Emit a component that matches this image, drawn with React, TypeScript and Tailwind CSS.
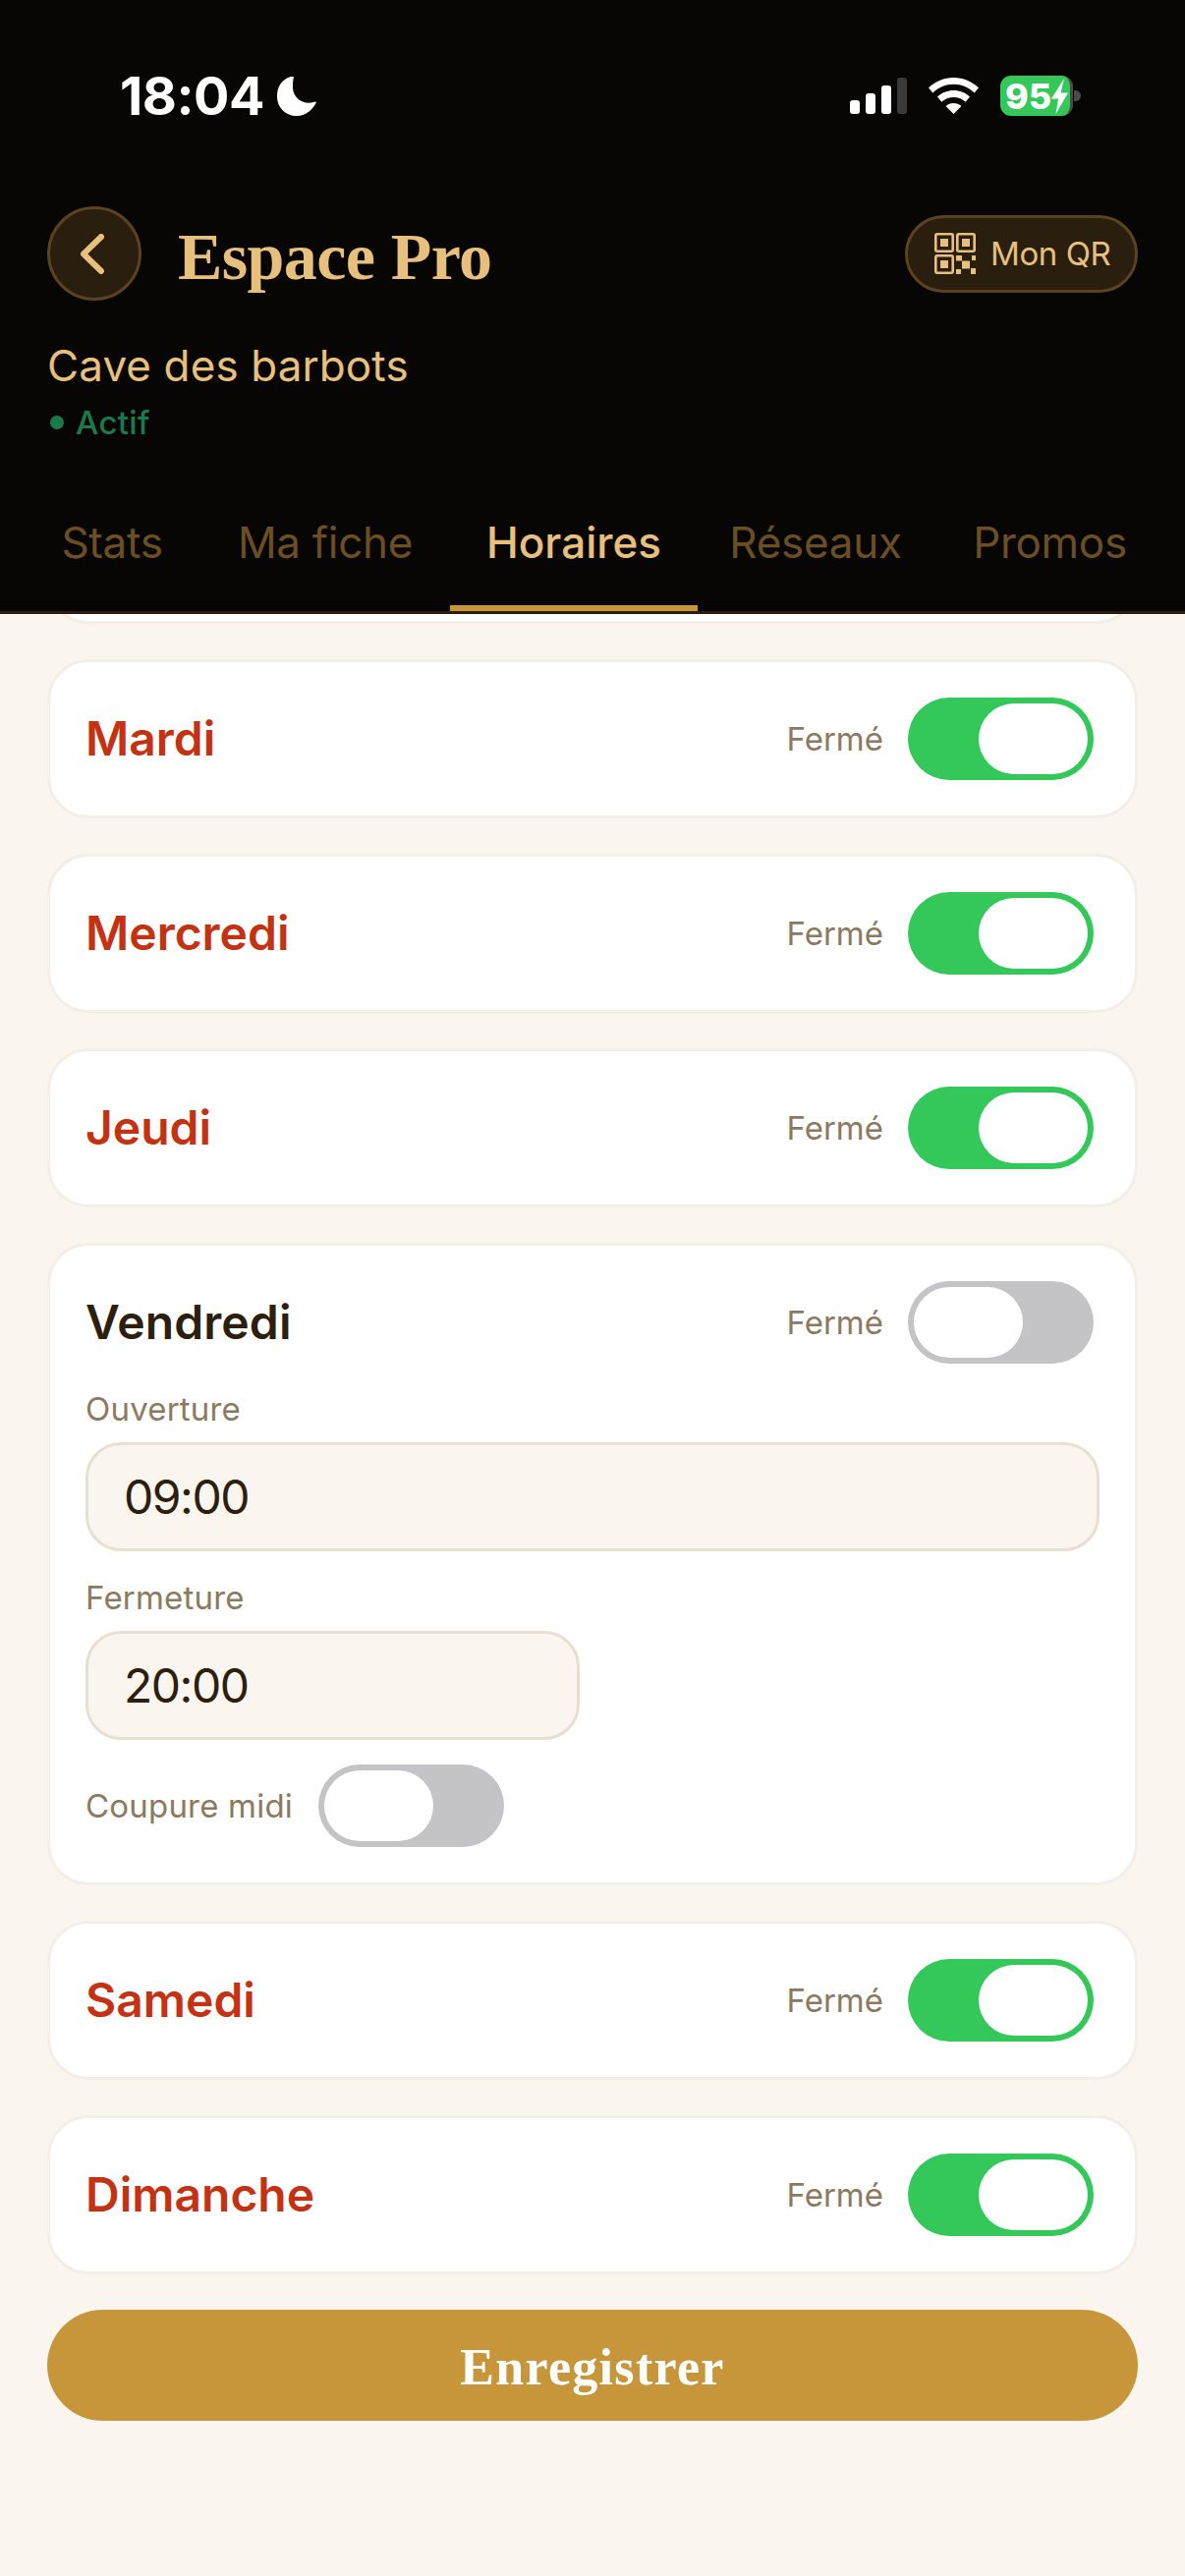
const sans = "font-['Inter','Noto_Sans',sans-serif]";

const Toggle: React.FC<{ on: boolean }> = ({ on }) => (
    <button
        className={`flex h-[84px] w-[189px] shrink-0 items-center rounded-full p-[6px] ${on ? 'justify-end bg-[#34c759]' : 'justify-start bg-[#c4c4c6]'}`}
    >
        <span className="block h-[72px] w-[111px] rounded-full bg-white" />
    </button>
);

const ClosedDay: React.FC<{ name: string }> = ({ name }) => (
    <div className="flex h-[162px] shrink-0 items-center justify-between rounded-[42px] border-[3px] border-[#f3efe8] bg-white pl-[36px] pr-[42px]">
        <span className="text-[48px] font-semibold leading-none tracking-[0px] text-[#c43214]">{name}</span>
        <div className="flex items-center gap-[25px]">
            <span className="text-[33px] leading-none tracking-[0px] text-[#8b7a62]">Fermé</span>
            <Toggle on />
        </div>
    </div>
);

const TimeField: React.FC<{ label: string; value: string; className: string }> = ({ label, value, className }) => (
    <div>
        <div className="text-[33px] leading-[40px] tracking-[0.2px] text-[#8b7a62]">{label}</div>
        <div className={`mt-[14px] flex h-[111px] items-center rounded-[36px] border-[3px] border-[#e8dfd0] bg-[#faf5ef] pl-[36px] text-[48px] leading-none tracking-[-1.5px] text-[#2c1f0e] ${className}`}>
            {value}
        </div>
    </div>
);

const QrIcon = () => (
    <svg width="42" height="42" viewBox="0 0 42 42" fill="#e8c07d" className="shrink-0">
        <g fill="none" stroke="#e8c07d" strokeWidth="2.6">
            <rect x="1.3" y="1.3" width="17.4" height="17.4" rx="1.5" />
            <rect x="23.3" y="1.3" width="17.4" height="17.4" rx="1.5" />
            <rect x="1.3" y="23.3" width="17.4" height="17.4" rx="1.5" />
        </g>
        <rect x="6" y="6" width="8" height="8" />
        <rect x="28" y="6" width="8" height="8" />
        <rect x="6" y="28" width="8" height="8" />
        <rect x="22" y="23" width="6" height="5.5" />
        <rect x="38" y="23" width="4" height="5" />
        <rect x="28" y="28.5" width="8" height="8" />
        <rect x="22" y="37" width="5" height="5" />
        <rect x="37" y="36" width="5" height="6" />
    </svg>
);

const StatusBar = () => (
    <div className="flex h-[41px] items-center justify-between pl-[122px] pr-[106px]">
        <div className="flex items-center gap-[13px]">
            <span className="text-[54px] font-bold leading-none tracking-[-0.5px] text-white">18:04</span>
            <svg width="40" height="40" viewBox="0 0 40 40" fill="white">
                <path d="M14 0C4 3 0 11 0 20c0 12 9 20 20 20 9 0 16-6 20-14-1-1-2-.5-3 0-10 3-21-4-21-15 0-4 0-8 1-10 0-1-1.500-1.200-3-1z" />
            </svg>
        </div>
        <div className="flex items-center">
            <div className="flex h-[37px] items-end gap-[6px]">
                <span className="block h-[14px] w-[10px] rounded-[3px] bg-white" />
                <span className="block h-[21px] w-[10px] rounded-[3px] bg-white" />
                <span className="block h-[29px] w-[10px] rounded-[3px] bg-white" />
                <span className="block h-[37px] w-[10px] rounded-[3px] bg-[#3a3a3a]" />
            </div>
            <svg width="51" height="37" viewBox="0 0 51 37" fill="white" className="ml-[22px]">
                <path d="M25.500 0C15.800 0 7 3.700 0 10.300l4.300 5.200C10.300 10 17.500 6.800 25.500 6.800S40.700 10 46.700 15.500L51 10.300C44 3.700 35.200 0 25.500 0z" />
                <path d="M25.500 13c-6.200 0-12 2.300-16.500 6.600l4.300 5.100c3.300-3.100 7.500-4.800 12.200-4.800s8.900 1.700 12.200 4.800l4.300-5.100C37.500 15.300 31.700 13 25.500 13z" />
                <path d="M25.500 26c-3 0-5.900 1.100-8 3.100L25.500 37l8-7.900c-2.100-2-5-3.100-8-3.100z" />
            </svg>
            <div className="ml-[22px] flex items-center">
                <div className="flex h-[41px] w-[74px] items-center rounded-[11px] border-r-[3px] border-[#4a4a4a] bg-[#34c759] pl-[5px]">
                    <span className="text-[36px] font-extrabold leading-none tracking-[0px] text-white">95</span>
                    <svg width="17" height="36" viewBox="0 0 17 36" fill="white" className="shrink-0">
                        <path d="M13 0 0 20.500h7L4.500 36 17 14.500h-7.500z" />
                    </svg>
                </div>
                <span className="ml-[1px] block h-[11px] w-[7px] rounded-r-full bg-[#4a4a4a]" />
            </div>
        </div>
    </div>
);

const tabs = [
    { label: 'Stats', width: 'w-[180px]' },
    { label: 'Ma fiche', width: 'w-[250px]' },
    { label: 'Horaires', width: 'w-[252px]', active: true },
    { label: 'Réseaux', width: 'w-[236px]' },
    { label: 'Promos', width: 'w-[237px]' },
];

export default function App() {
    return (
        <div className={`flex h-[2622px] w-[1206px] flex-col overflow-hidden bg-[#faf5ef] ${sans}`}>
            <header className="relative z-10 h-[625px] shrink-0 border-b-[3px] border-[#2a1e0f] bg-[#070605] pt-[77px]">
                <StatusBar />

                <div className="mt-[92px] flex h-[96px] items-center justify-between px-[48px]">
                    <div className="flex items-center gap-[37px]">
                        <button className="flex h-[96px] w-[96px] items-center justify-center rounded-full border-[3px] border-[#5c4320] bg-[#2a1e0f]">
                            <svg width="24" height="41" viewBox="0 0 24 41" fill="none" stroke="#e8c07d" strokeWidth="6" strokeLinecap="round" strokeLinejoin="round" className="mr-[4px]">
                                <path d="M21 3 3 20.500 21 38" />
                            </svg>
                        </button>
                        <h1 className="pt-[6px] font-['Liberation_Serif',serif] text-[68px] font-bold leading-none tracking-[-0.6px] text-[#e8c07d]">Espace Pro</h1>
                    </div>
                    <button className="flex h-[79px] w-[237px] items-center gap-[15px] rounded-full border-[3px] border-[#5c4320] bg-[#2a1e0f] pl-[27px]">
                        <QrIcon />
                        <span className="text-[33px] leading-none tracking-[-0.4px] text-[#e8c07d]">Mon QR</span>
                    </button>
                </div>

                <div className="mt-[40px] pl-[48px] text-[44px] leading-[52px] tracking-[0.1px] text-[#e8c07d]">Cave des barbots</div>
                <div className="mt-[12px] flex items-center gap-[12px] pl-[51px] text-[33px] font-medium leading-[40px] tracking-[0.3px] text-[#1a7a4a]">
                    <span className="block h-[14px] w-[14px] rounded-full bg-[#1a7a4a]" />
                    Actif
                </div>

                <nav className="mt-[38px] flex gap-[2px] pl-[24px]">
                    {tabs.map((tab) => (
                        <button
                            key={tab.label}
                            className={`h-[134px] shrink-0 border-b-[6px] text-center text-[44px] leading-none ${tab.width} ${tab.active ? 'border-[#c8963a] font-medium tracking-[0px] text-[#e8c07d]' : 'border-transparent font-normal tracking-[-0.3px] text-[#6a4e24]'}`}
                        >
                            {tab.label}
                        </button>
                    ))}
                </nav>
            </header>

            <main className="flex flex-1 flex-col gap-[36px] overflow-hidden px-[48px]">
                {/* Lundi is scrolled under the header, only its bottom edge shows */}
                <div className="mt-[-152px] h-[162px] shrink-0 rounded-[42px] border-[3px] border-[#f3efe8] bg-white" />
                <ClosedDay name="Mardi" />
                <ClosedDay name="Mercredi" />
                <ClosedDay name="Jeudi" />

                <div className="flex h-[654px] shrink-0 flex-col rounded-[42px] border-[3px] border-[#f3efe8] bg-white px-[36px] pt-[36px]">
                    <div className="flex h-[84px] items-center justify-between pr-[6px]">
                        <span className="text-[48px] font-semibold leading-none tracking-[0.1px] text-[#2c1f0e]">Vendredi</span>
                        <div className="flex items-center gap-[25px]">
                            <span className="text-[33px] leading-none tracking-[0px] text-[#8b7a62]">Fermé</span>
                            <Toggle on={false} />
                        </div>
                    </div>
                    <div className="mt-[26px] flex flex-col gap-[27px]">
                        <TimeField label="Ouverture" value="09:00" className="w-full" />
                        <TimeField label="Fermeture" value="20:00" className="w-[503px]" />
                    </div>
                    <div className="mt-[25px] flex items-center gap-[26px]">
                        <span className="text-[33px] leading-none tracking-[0.2px] text-[#8b7a62]">Coupure midi</span>
                        <Toggle on={false} />
                    </div>
                </div>

                <ClosedDay name="Samedi" />
                <ClosedDay name="Dimanche" />

                <button className="h-[113px] shrink-0 rounded-full bg-[#c8963a] pt-[4px] font-['Liberation_Serif',serif] text-[52px] font-bold leading-none tracking-[1.3px] text-white">
                    Enregistrer
                </button>
            </main>
        </div>
    );
}
